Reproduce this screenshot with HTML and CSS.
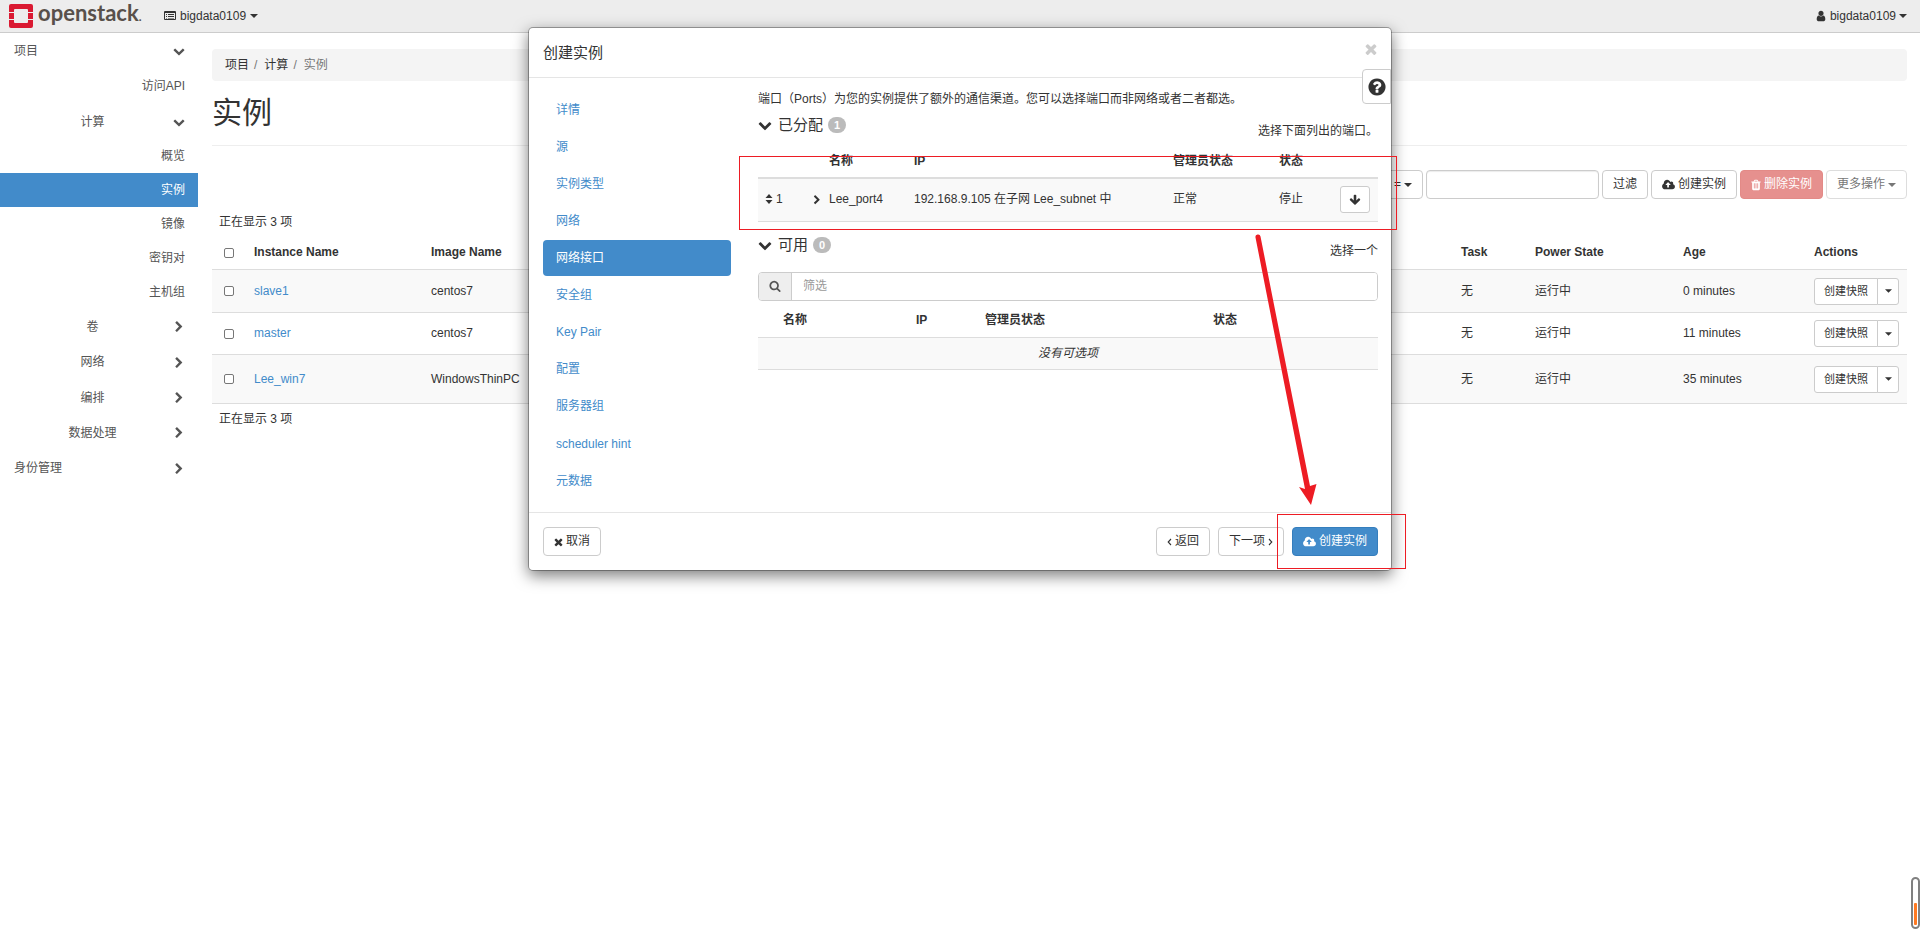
FILE: index.html
```html
<!DOCTYPE html>
<html lang="zh-CN">
<head>
<meta charset="utf-8">
<title>实例 - OpenStack Dashboard</title>
<link rel="stylesheet" href="styles.css">
</head>
<body>
<svg class="sprite" aria-hidden="true">
  <symbol id="i-down" viewBox="0 0 1792 1792"><path d="M1683 808l-742 741q-19 19-45 19t-45-19l-742-741q-19-19-19-45.500t19-45.500l166-165q19-19 45-19t45 19l531 531 531-531q19-19 45-19t45 19l166 165q19 19 19 45.500t-19 45.500z"/></symbol>
  <symbol id="i-right" viewBox="0 0 1792 1792"><path d="M1363 877l-742 742q-19 19-45 19t-45-19l-166-166q-19-19-19-45t19-45l531-531-531-531q-19-19-19-45t19-45l166-166q19-19 45-19t45 19l742 742q19 19 19 45t-19 45z"/></symbol>
  <symbol id="i-search" viewBox="0 0 1792 1792"><path d="M1216 832q0-185-131.500-316.500t-316.500-131.500-316.500 131.500-131.500 316.500 131.500 316.500 316.500 131.500 316.500-131.500 131.500-316.500zm512 832q0 52-38 90t-90 38q-54 0-90-38l-343-342q-179 124-399 124-143 0-273.500-55.500t-225-150-150-225-55.500-273.500 55.500-273.500 150-225 225-150 273.500-55.500 273.500 55.500 225 150 150 225 55.500 273.500q0 220-124 399l343 343q37 37 37 90z"/></symbol>
  <symbol id="i-times" viewBox="240 128 1312 1536"><path d="M1490 1322q0 40-28 68l-136 136q-28 28-68 28t-68-28l-294-294-294 294q-28 28-68 28t-68-28l-136-136q-28-28-28-68t28-68l294-294-294-294q-28-28-28-68t28-68l136-136q28-28 68-28t68 28l294 294 294-294q28-28 68-28t68 28l136 136q28 28 28 68t-28 68l-294 294 294 294q28 28 28 68z"/></symbol>
  <symbol id="i-cloud" viewBox="-64 0 1920 1792"><path d="M1216 864q0-14-9-23l-352-352q-9-9-23-9t-23 9l-351 351q-10 12-10 24 0 14 9 23t23 9h224v352q0 13 9.500 22.500t22.500 9.500h192q13 0 22.500-9.500t9.500-22.500v-352h224q13 0 22.500-9.500t9.500-22.500zm640 288q0 159-112.500 271.500t-271.500 112.500h-1088q-185 0-316.500-131.500t-131.500-316.500q0-130 70-240t188-165q-2-30-2-43 0-212 150-362t362-150q156 0 285.500 87t188.500 231q71-62 166-62 106 0 181 75t75 181q0 76-41 138 130 31 213.500 135.500t83.500 238.500z"/></symbol>
  <symbol id="i-user" viewBox="0 0 1792 1792"><path d="M1536 1399q0 109-62.500 187t-150.500 78h-854q-88 0-150.500-78t-62.500-187q0-85 8.500-160.500t31.500-152 58.500-131 94-89 134.500-34.500q131 128 313 128t313-128q76 0 134.500 34.500t94 89 58.500 131 31.500 152 8.500 160.500zm-256-887q0 159-112.500 271.500t-271.500 112.500-271.500-112.500-112.500-271.500 112.500-271.500 271.500-112.500 271.500 112.500 112.500 271.500z"/></symbol>
  <symbol id="i-trash" viewBox="192 0 1408 1792"><path d="M704 1376v-704q0-14-9-23t-23-9h-64q-14 0-23 9t-9 23v704q0 14 9 23t23 9h64q14 0 23-9t9-23zm256 0v-704q0-14-9-23t-23-9h-64q-14 0-23 9t-9 23v704q0 14 9 23t23 9h64q14 0 23-9t9-23zm256 0v-704q0-14-9-23t-23-9h-64q-14 0-23 9t-9 23v704q0 14 9 23t23 9h64q14 0 23-9t9-23zm-544-992h448l-48-117q-7-9-17-11h-317q-10 2-17 11zm928 32v64q0 14-9 23t-23 9h-96v948q0 83-47 143.500t-113 60.500h-832q-66 0-113-58.500t-47-141.500v-952h-96q-14 0-23-9t-9-23v-64q0-14 9-23t23-9h309l70-167q15-37 54-63t79-26h320q40 0 79 26t54 63l70 167h309q14 0 23 9t9 23z"/></symbol>
  <symbol id="i-help" viewBox="0 0 1792 1792"><path d="M1024 1376v-192q0-14-9-23t-23-9h-192q-14 0-23 9t-9 23v192q0 14 9 23t23 9h192q14 0 23-9t9-23zm256-672q0-88-55.500-163t-138.500-116-170-41q-243 0-371 213-15 24 8 42l132 100q7 6 19 6 16 0 25-12 53-68 86-92 34-24 86-24 48 0 85.500 26t37.500 59q0 38-20 61t-68 45q-63 28-115.500 86.500t-52.500 125.500v36q0 14 9 23t23 9h192q14 0 23-9t9-23q0-19 21.500-49.500t54.500-49.500q32-18 49-28.500t46-35 44.500-48 28-60.500 12.500-81zm384 192q0 209-103 385.500t-279.500 279.500-385.500 103-385.500-103-279.500-279.500-103-385.500 103-385.500 279.500-279.500 385.500-103 385.500 103 279.500 279.500 103 385.500z"/></symbol>
  <symbol id="i-arrow" viewBox="0 0 1792 1792"><path d="M1675 832q0 53-37 90l-651 652q-39 37-91 37-53 0-90-37l-651-652q-38-36-38-90 0-53 38-91l74-75q39-37 91-37 53 0 90 37l294 294v-704q0-52 38-90t90-38h128q52 0 90 38t38 90v704l294-294q37-37 90-37 52 0 91 37l75 75q37 39 37 91z"/></symbol>
  <symbol id="i-sort" viewBox="0 0 8 10"><path d="M4 0L7.500 4H.5zM4 10L.5 6h7z"/></symbol>
  <symbol id="i-caret" viewBox="0 0 8 4"><path d="M0 0h8L4 4z"/></symbol>
  <symbol id="i-list" viewBox="0 0 12 10"><path fill-rule="evenodd" d="M1 0h10a1 1 0 0 1 1 1v7a1 1 0 0 1-1 1H1a1 1 0 0 1-1-1V1a1 1 0 0 1 1-1zM1 2v6h10V2zM2 3h1v1H2zM4 3h6v1H4zM2 5h1v1H2zM4 5h6v1H4zM2 7h1v.5H2zM4 7h6v.5H4z"/></symbol>
  <symbol id="i-angle-left" viewBox="0 0 5 8"><path d="M4 1L1.200 4L4 7" fill="none" stroke="currentColor" stroke-width="1.100"/></symbol>
  <symbol id="i-angle-right" viewBox="0 0 5 8"><path d="M1 1l2.800 3L1 7" fill="none" stroke="currentColor" stroke-width="1.100"/></symbol>
</svg>

<header class="topbar">
  <a class="brand" href="#">
    <svg class="brand-mark" viewBox="0 0 24 24" aria-hidden="true"><path fill="#da1a32" fill-rule="evenodd" d="M2 0h20a2 2 0 0 1 2 2v6h-5V6a1 1 0 0 0-1-1H6a1 1 0 0 0-1 1v2H0V2a2 2 0 0 1 2-2zM0 9h5v6H0zM19 9h5v6h-5zM0 16h5v2a1 1 0 0 0 1 1h12a1 1 0 0 0 1-1v-2h5v6a2 2 0 0 1-2 2H2a2 2 0 0 1-2-2z"/></svg>
    <span class="brand-name">openstack<small>.</small></span>
  </a>
  <button class="menu" type="button"><svg class="ic-list"><use href="#i-list"/></svg>bigdata0109<svg class="caret"><use href="#i-caret"/></svg></button>
  <button class="menu menu-user" type="button"><svg class="ic"><use href="#i-user"/></svg>bigdata0109<svg class="caret"><use href="#i-caret"/></svg></button>
</header>

<div class="page">
  <nav class="sidebar">
    <a class="s-top" href="#">项目<svg class="ic"><use href="#i-down"/></svg></a>
    <a class="s-leaf s-tall" href="#">访问API</a>
    <a class="s-group" href="#"><span>计算</span><svg class="ic"><use href="#i-down"/></svg></a>
    <a class="s-leaf" href="#">概览</a>
    <a class="s-leaf s-active" href="#">实例</a>
    <a class="s-leaf" href="#">镜像</a>
    <a class="s-leaf" href="#">密钥对</a>
    <a class="s-leaf" href="#">主机组</a>
    <a class="s-group" href="#"><span>卷</span><svg class="ic"><use href="#i-right"/></svg></a>
    <a class="s-group s-tall" href="#"><span>网络</span><svg class="ic"><use href="#i-right"/></svg></a>
    <a class="s-group" href="#"><span>编排</span><svg class="ic"><use href="#i-right"/></svg></a>
    <a class="s-group" href="#"><span>数据处理</span><svg class="ic"><use href="#i-right"/></svg></a>
    <a class="s-top s-tall" href="#">身份管理<svg class="ic"><use href="#i-right"/></svg></a>
  </nav>

  <main class="main">
    <ol class="crumbs"><li><a href="#">项目</a></li><li><a href="#">计算</a></li><li class="current">实例</li></ol>
    <h1 class="title">实例</h1>

    <div class="toolbar">
      <button class="btn" type="button">=<svg class="caret"><use href="#i-caret"/></svg></button>
      <input class="field" type="text" aria-label="过滤">
      <button class="btn" type="button">过滤</button>
      <button class="btn" type="button"><svg class="ic-cloud"><use href="#i-cloud"/></svg>创建实例</button>
      <button class="btn btn-danger" type="button" disabled><svg class="ic-trash"><use href="#i-trash"/></svg>删除实例</button>
      <button class="btn btn-faded" type="button" disabled>更多操作<svg class="caret"><use href="#i-caret"/></svg></button>
    </div>

    <p class="count">正在显示 3 项</p>
    <table class="grid">
      <colgroup><col class="g-check"><col class="g-name"><col class="g-image"><col><col class="g-task"><col class="g-power"><col class="g-age"><col class="g-act"></colgroup>
      <thead><tr><th><input type="checkbox" aria-label="全选"></th><th>Instance Name</th><th>Image Name</th><th></th><th>Task</th><th>Power State</th><th>Age</th><th>Actions</th></tr></thead>
      <tbody>
        <tr class="odd first"><td><input type="checkbox" aria-label="slave1"></td><td><a href="#">slave1</a></td><td>centos7</td><td></td><td>无</td><td>运行中</td><td>0 minutes</td><td><div class="split"><button type="button">创建快照</button><button type="button" aria-label="更多"><svg class="caret-sm"><use href="#i-caret"/></svg></button></div></td></tr>
        <tr><td><input type="checkbox" aria-label="master"></td><td><a href="#">master</a></td><td>centos7</td><td></td><td>无</td><td>运行中</td><td>11 minutes</td><td><div class="split"><button type="button">创建快照</button><button type="button" aria-label="更多"><svg class="caret-sm"><use href="#i-caret"/></svg></button></div></td></tr>
        <tr class="odd tall"><td><input type="checkbox" aria-label="Lee_win7"></td><td><a href="#">Lee_win7</a></td><td>WindowsThinPC</td><td></td><td>无</td><td>运行中</td><td>35 minutes</td><td><div class="split"><button type="button">创建快照</button><button type="button" aria-label="更多"><svg class="caret-sm"><use href="#i-caret"/></svg></button></div></td></tr>
      </tbody>
    </table>
    <p class="count">正在显示 3 项</p>
  </main>
</div>

<div class="overlay">
  <section class="modal" role="dialog" aria-labelledby="dlg-title">
    <header class="modal-head">
      <h2 id="dlg-title">创建实例</h2>
      <button class="close" type="button" aria-label="关闭"><svg><use href="#i-times"/></svg></button>
    </header>
    <button class="help" type="button" aria-label="帮助"><svg><use href="#i-help"/></svg></button>

    <div class="modal-body">
      <nav class="steps">
        <a href="#">详情</a><a href="#">源</a><a href="#">实例类型</a><a href="#">网络</a><a class="on" href="#">网络接口</a><a href="#">安全组</a><a href="#">Key Pair</a><a href="#">配置</a><a href="#">服务器组</a><a class="long" href="#">scheduler hint</a><a href="#">元数据</a>
      </nav>
      <div class="pane">
        <p class="intro">端口（Ports）为您的实例提供了额外的通信渠道。您可以选择端口而非网络或者二者都选。</p>
        <div class="sect"><h3><svg><use href="#i-down"/></svg>已分配<span class="badge">1</span></h3><span class="hint">选择下面列出的端口。</span></div>
        <table class="ports ports-used">
          <colgroup><col class="p1"><col class="p2"><col class="p3"><col class="p4"><col class="p5"><col class="p6"><col class="p7"></colgroup>
          <thead><tr><th></th><th></th><th>名称</th><th>IP</th><th>管理员状态</th><th>状态</th><th></th></tr></thead>
          <tbody><tr><td><svg class="ic-sort"><use href="#i-sort"/></svg>1</td><td><svg class="ic-open"><use href="#i-right"/></svg></td><td>Lee_port4</td><td>192.168.9.105 在子网 Lee_subnet 中</td><td>正常</td><td>停止</td><td><button class="btn btn-move" type="button" aria-label="移除"><svg><use href="#i-arrow"/></svg></button></td></tr></tbody>
        </table>
        <div class="sect sect-free"><h3><svg><use href="#i-down"/></svg>可用<span class="badge">0</span></h3><span class="hint">选择一个</span></div>
        <div class="search"><label for="q" aria-label="筛选"><svg class="ic"><use href="#i-search"/></svg></label><input id="q" type="text" placeholder="筛选"></div>
        <table class="ports ports-free">
          <colgroup><col class="f1"><col class="f2"><col class="f3"><col class="f4"><col class="f5"></colgroup>
          <thead><tr><th></th><th>名称</th><th>IP</th><th>管理员状态</th><th>状态</th></tr></thead>
          <tbody><tr><td class="empty" colspan="5">没有可选项</td></tr></tbody>
        </table>
      </div>
    </div>

    <footer class="modal-foot">
      <button class="btn cancel" type="button"><svg class="ic-x"><use href="#i-times"/></svg>取消</button>
      <button class="btn" type="button"><svg class="angle"><use href="#i-angle-left"/></svg>返回</button>
      <button class="btn" type="button">下一项<svg class="angle"><use href="#i-angle-right"/></svg></button>
      <button class="btn btn-primary" type="button"><svg class="ic-cloud"><use href="#i-cloud"/></svg>创建实例</button>
    </footer>

    <div class="mark mark-row"></div>
    <div class="mark mark-create"></div>
    <svg class="pointer" viewBox="0 0 70 276" aria-hidden="true"><path d="M4.500 5.500a2.500 2.500 0 0 1 5-1L59 254l6.500-2L60 273 48 255l6 2z" fill="#ed1c24"/></svg>
  </section>
</div>
<div class="meter"><span></span></div>
</body>
</html>
```
FILE: styles.css
```css
* { box-sizing: border-box; }
html { height: 100%; }
body {
  min-height: 100%;
  margin: 0;
  position: relative;
  background: #fff;
  color: #333;
  font: 12px/17px "Liberation Sans", "Noto Sans CJK SC", sans-serif;
}
a { color: #428bca; text-decoration: none; }
button, input { font: inherit; color: inherit; }
button { cursor: pointer; }
p, h1, h2, h3, ol { margin: 0; padding: 0; font-weight: normal; }
svg { fill: currentColor; flex: none; }
table { width: 100%; border-collapse: collapse; table-layout: fixed; }
th { text-align: left; }
.sprite { position: absolute; width: 0; height: 0; }
.ic { width: 12px; height: 12px; }
.caret { width: 8px; height: 4px; }
.caret-sm { width: 7px; height: 4px; }
.ic-cloud { width: 13px; height: 12px; }
.ic-trash { width: 10px; height: 12px; }

/* top bar */
.topbar {
  display: flex;
  align-items: center;
  height: 33px;
  padding: 0 13px 0 9px;
  background: #ededed;
  border-bottom: 1px solid #ccc;
}
.brand { display: flex; align-items: center; gap: 5px; width: 155px; }
.brand-mark { width: 24px; height: 24px; }
.brand-name { padding-bottom: 2px; color: #58504a; font: 700 22px/26px Lato, sans-serif; }
.brand-name small { font-size: 12px; }
.menu { display: flex; align-items: center; gap: 4px; padding: 0; border: 0; background: none; }
.menu-user { margin-left: auto; gap: 3px; }
.ic-list { width: 12px; height: 10px; }

/* sidebar */
.page { display: flex; align-items: flex-start; }
.sidebar { width: 198px; flex: none; }
.sidebar a { display: flex; align-items: center; height: 35px; padding: 1px 13px 0 14px; color: #555; }
.sidebar .s-top { justify-content: space-between; }
.sidebar .s-leaf { justify-content: flex-end; height: 34px; }
.sidebar .s-tall { height: 36px; }
.sidebar .s-active { background: #428bca; color: #fff; }
.sidebar .s-group { padding-left: 12px; }
.sidebar .s-group span { flex: 1; text-align: center; }

/* main */
.main { flex: 1; padding: 16px 13px 0 14px; }
.crumbs { display: flex; padding: 8px 13px 7px; background: #f4f4f4; border-radius: 4px; list-style: none; }
.crumbs a { color: #333; }
.crumbs li + li::before { content: "/"; padding: 0 7px 0 5px; color: #777; }
.crumbs .current { color: #777; }
.title { padding: 11px 0 12px; border-bottom: 1px solid #eee; font-size: 30px; line-height: 41px; }
.toolbar { display: flex; justify-content: flex-end; gap: 3px; padding-top: 24px; }
.btn {
  display: flex;
  align-items: center;
  justify-content: center;
  gap: 3px;
  height: 29px;
  padding: 0 10px;
  border: 1px solid #ccc;
  border-radius: 4px;
  background: #fff;
  white-space: nowrap;
}
.btn-danger { background: #e6908e; border-color: #e38a87; color: #fff; }
.btn-faded { border-color: #ddd; color: #777; }
.field { width: 173px; height: 29px; border: 1px solid #ccc; border-radius: 4px; box-shadow: inset 0 1px 1px rgba(0, 0, 0, .08); }
.count { padding: 7px; }
.toolbar + .count { padding: 15px 7px 3px; }

.grid td { padding: 1px 8px 0; }
.grid th { padding: 3px 8px 0; }
.grid tr { height: 42px; border-bottom: 1px solid #ddd; }
.grid thead tr { height: 35px; }
.grid .first { height: 43px; }
.grid .odd { background: #f9f9f9; }
.grid .tall { height: 49px; }
.g-check { width: 34px; }
.g-name { width: 177px; }
.g-image { width: 177px; }
.g-task { width: 74px; }
.g-power { width: 148px; }
.g-age { width: 131px; }
.g-act { width: 101px; }
input[type="checkbox"] {
  appearance: none;
  display: block;
  width: 10px;
  height: 10px;
  margin: 0 0 0 4px;
  border: 1px solid #777;
  border-radius: 2px;
  background: #fff;
}
.split { display: flex; }
.split button { display: flex; align-items: center; justify-content: center; width: 64px; height: 27px; padding: 0; border: 1px solid #ccc; border-radius: 3px 0 0 3px; background: #fff; }
.split button:first-child { font-size: 11px; }
.split button + button { width: 22px; margin-left: -1px; border-radius: 0 3px 3px 0; }

/* dialog */
.overlay { position: absolute; top: 27px; left: 0; right: 0; display: flex; justify-content: center; }
.modal {
  position: relative;
  width: 45%;
  min-width: 840px;
  border: 1px solid #999;
  border-color: rgba(0, 0, 0, .3);
  border-radius: 5px;
  background: #fff;
  background-clip: padding-box;
  box-shadow: 0 5px 15px rgba(0, 0, 0, .5);
}
.modal-head { display: flex; align-items: center; justify-content: space-between; height: 50px; padding: 0 14px; border-bottom: 1px solid #e5e5e5; }
.modal-head h2 { font-size: 15px; line-height: 22px; }
.close { padding: 0 0 8px; border: 0; background: none; color: #ccc; line-height: 0; }
.close svg { width: 12px; height: 14px; }
.help {
  position: absolute;
  top: 41px;
  right: 0;
  display: flex;
  align-items: center;
  justify-content: center;
  width: 29px;
  height: 35px;
  padding: 0;
  border: 1px solid #ccc;
  border-radius: 4px 0 0 4px;
  background: #fff;
}
.help svg { width: 20px; height: 20px; }
.modal-body { display: flex; gap: 27px; padding: 14px 13px 13px 14px; }
.steps { display: flex; flex-direction: column; gap: 1px; width: 188px; flex: none; }
.steps a { padding: 10px 13px 9px; border-radius: 4px; }
.steps .on { background: #428bca; color: #fff; }
.steps .long { padding: 11px 13px 9px; }
.pane { flex: 1; min-width: 0; }
.intro { margin-top: -1px; }
.sect { display: flex; align-items: flex-start; justify-content: space-between; padding-top: 6px; height: 37px; }
.sect h3 { display: flex; align-items: center; font-size: 15px; line-height: 22px; }
.sect h3 svg { width: 14px; height: 14px; margin-right: 6px; }
.badge { min-width: 18px; margin-left: 5px; padding: 0 6px; border-radius: 8px; background: #bbb; color: #fff; font-size: 11px; line-height: 16px; font-weight: bold; text-align: center; }
.hint { padding-top: 9px; }
.ports th, .ports td { padding: 0 0 0 7px; }
.ports tbody tr { background: #f9f9f9; border-bottom: 1px solid #ddd; }
.ports-used thead tr { height: 33px; border-bottom: 2px solid #ddd; }
.ports-used tbody tr { height: 43px; }
.ports-free thead tr { height: 37px; border-bottom: 1px solid #ddd; }
.ports-free thead th { padding-top: 4px; }
.ports-free tbody tr { height: 32px; }
.p1 { width: 47px; }
.p2 { width: 17px; }
.p3 { width: 85px; }
.p4 { width: 259px; }
.p5 { width: 106px; }
.p6 { width: 61px; }
.p7 { width: 45px; }
.f1 { width: 18px; }
.f2 { width: 133px; }
.f3 { width: 69px; }
.f4 { width: 228px; }
.f5 { width: 172px; }
.ic-sort { width: 8px; height: 10px; margin-right: 3px; vertical-align: -1px; }
.ic-open { display: block; width: 10px; height: 12px; }
.btn-move { width: 30px; height: 27px; padding: 0; border-radius: 3px; }
.btn-move svg { width: 12px; height: 12px; }
.sect-free { padding-top: 12px; height: 50px; }
.ports td.empty { padding: 0; text-align: center; font-style: italic; }
.search { display: flex; height: 29px; border: 1px solid #ccc; border-radius: 4px; overflow: hidden; }
.search label { display: flex; align-items: center; justify-content: center; width: 33px; background: #eee; border-right: 1px solid #ccc; color: #555; }
.search input { flex: 1; padding: 0 11px; border: 0; }
.search input::placeholder { color: #999; }
.modal-foot { display: flex; gap: 8px; padding: 14px 13px 14px 14px; border-top: 1px solid #e5e5e5; }
.cancel { margin-right: auto; }
.ic-x { width: 9px; height: 10px; }
.angle { width: 5px; height: 8px; }
.btn-primary { background: #428bca; border-color: #357ebd; color: #fff; }

/* annotations drawn over the dialog */
.mark { position: absolute; border: 1px solid #ed1c24; pointer-events: none; }
.mark-row { top: 128px; left: 210px; right: -6px; height: 74px; }
.mark-create { right: -15px; bottom: 1px; width: 129px; height: 55px; }
.pointer { position: absolute; top: 204px; right: 70px; width: 70px; height: 276px; pointer-events: none; }

.meter { position: absolute; right: 0; bottom: 17px; display: flex; align-items: flex-end; justify-content: center; width: 9px; height: 52px; padding: 2px 1px; border: 2px solid #808080; border-radius: 5px; background: #fff; }
.meter span { width: 3px; height: 22px; border-radius: 1px; background: #ff7a22; }
```
